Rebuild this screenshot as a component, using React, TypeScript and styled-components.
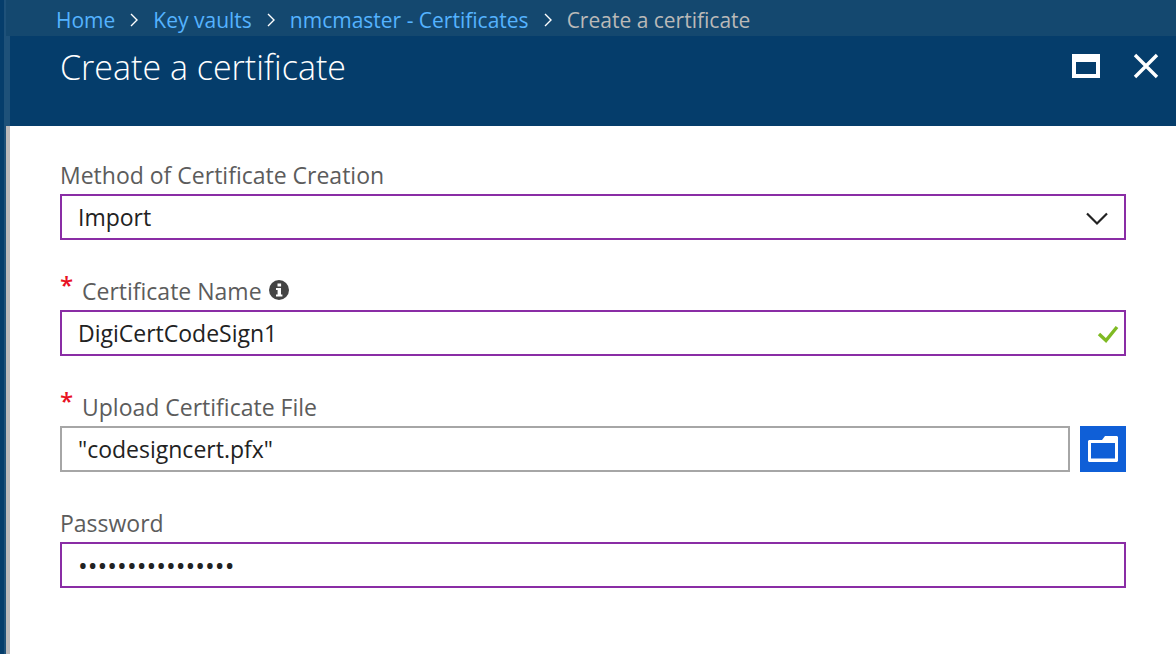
import React from 'react';
import styled, { createGlobalStyle } from 'styled-components';

const GlobalStyle = createGlobalStyle`
  * { box-sizing: border-box; }
  body {
    margin: 0;
    background: #053d6b;
    font-family: "Open Sans", "Noto Sans", sans-serif;
  }
`;

const Shell = styled.div`
  display: flex;
  flex-direction: column;
  min-height: 100vh;
  margin-left: 4px;
  border-left: 2px solid #1e5179;
`;

const Breadcrumbs = styled.nav`
  display: flex;
  align-items: center;
  height: 36px;
  padding: 4px 50px 0 50px;
  background: #14486f;
  font-size: 21px;
  line-height: 32px;
  white-space: nowrap;
`;

const CrumbLink = styled.a`
  color: #55b3ff;
  text-decoration: none;
`;

const CurrentCrumb = styled.span`
  color: #bab9b8;
`;

const Separator = styled.svg`
  flex: none;
  width: 8px;
  height: 14px;
  margin: 0 15px;
`;

const Header = styled.header`
  display: flex;
  justify-content: space-between;
  align-items: flex-start;
  height: 90px;
  padding: 8px 16px 0 50px;
  border-left: 4px solid #1e5179;
  background: #053d6b;
`;

const Title = styled.h1`
  margin: 0;
  color: #fff;
  font-size: 34px;
  font-weight: 300;
  line-height: 46px;
`;

const WindowButtons = styled.div`
  display: flex;
  gap: 30px;
  padding-top: 8px;
`;

const IconButton = styled.button`
  display: flex;
  padding: 0;
  border: 0;
  background: transparent;
  cursor: pointer;
`;

const Form = styled.form`
  display: flex;
  flex: 1;
  flex-direction: column;
  gap: 34px;
  padding: 32px 50px 32px 50px;
  border-left: 4px solid #bdb9b9;
  background: #fff;
`;

const FieldHeading = styled.div`
  display: flex;
  align-items: flex-start;
  height: 36px;
`;

const Required = styled.span`
  width: 22px;
  color: #e81123;
  font-size: 24px;
  font-weight: 600;
  line-height: 22px;
`;

const Label = styled.label`
  color: #5c5c5c;
  font-size: 23px;
  line-height: 34px;
`;

const InfoIcon = styled.svg`
  margin: 6px 0 0 6px;
`;

const Control = styled.div`
  position: relative;
  display: flex;
  gap: 10px;
`;

const controlBase = `
  flex: 1;
  min-width: 0;
  width: 100%;
  height: 46px;
  margin: 0;
  padding: 0 48px 0 16px;
  border-radius: 0;
  outline: none;
  background: #fff;
  color: #222;
  font-family: inherit;
  font-size: 23px;
`;

const TextInput = styled.input<{ $plain?: boolean }>`
  ${controlBase}
  border: 2px solid ${(p) => (p.$plain ? '#a6a6a6' : '#8a2da5')};
`;

const PasswordInput = styled(TextInput)`
  font-size: 26px;
`;

const Select = styled.select`
  ${controlBase}
  appearance: none;
  border: 2px solid #8a2da5;
`;

const ControlIcon = styled.svg<{ $right: number }>`
  position: absolute;
  top: 12px;
  right: ${(p) => p.$right}px;
  pointer-events: none;
`;

const BrowseButton = styled.button`
  display: flex;
  align-items: center;
  justify-content: center;
  width: 46px;
  height: 46px;
  padding: 0;
  border: 0;
  background: #0f5fd7;
  cursor: pointer;
`;

const CrumbSeparator = () => (
  <Separator viewBox="0 0 8 14" aria-hidden="true">
    <path d="M1 1l6 6-6 6" fill="none" stroke="#fff" strokeWidth="1.4" />
  </Separator>
);

interface FieldProps {
  id: string;
  label: string;
  required?: boolean;
  info?: boolean;
  children: React.ReactNode;
}

const Field = ({ id, label, required, info, children }: FieldProps) => (
  <div>
    <FieldHeading>
      {required && <Required aria-hidden="true">*</Required>}
      <Label htmlFor={id}>{label}</Label>
      {info && (
        <InfoIcon width="22" height="22" viewBox="0 0 22 22" aria-hidden="true">
          <circle cx="11" cy="10" r="10" fill="#444" />
          <path d="M9.500 3.400h3.600v3H9.500zM8 8h5v6.400h1.400v2H8v-2h1.600V10H8z" fill="#fff" />
        </InfoIcon>
      )}
    </FieldHeading>
    <Control>{children}</Control>
  </div>
);

export default function App() {
  return (
    <>
      <GlobalStyle />
      <Shell>
        <Breadcrumbs aria-label="Breadcrumb">
          <CrumbLink href="#home">Home</CrumbLink>
          <CrumbSeparator />
          <CrumbLink href="#vaults">Key vaults</CrumbLink>
          <CrumbSeparator />
          <CrumbLink href="#certificates">nmcmaster - Certificates</CrumbLink>
          <CrumbSeparator />
          <CurrentCrumb aria-current="page">Create a certificate</CurrentCrumb>
        </Breadcrumbs>
        <Header>
          <Title>Create a certificate</Title>
          <WindowButtons>
            <IconButton type="button" aria-label="Maximize">
              <svg width="32" height="28" viewBox="0 0 32 28">
                <path d="M2 2h28v24H2zM6 10v12h20V10z" fill="#fff" fillRule="evenodd" />
              </svg>
            </IconButton>
            <IconButton type="button" aria-label="Close">
              <svg width="28" height="28" viewBox="0 0 28 28">
                <path d="M3 3l22 22M25 3L3 25" stroke="#fff" strokeWidth="3.4" />
              </svg>
            </IconButton>
          </WindowButtons>
        </Header>
        <Form>
          <Field id="method" label="Method of Certificate Creation">
            <Select id="method" defaultValue="Import">
              <option>Import</option>
            </Select>
            <ControlIcon $right={16} width="26" height="24" viewBox="0 0 26 24">
              <path d="M3 7.5l10 10 10-10" fill="none" stroke="#222" strokeWidth="2.2" />
            </ControlIcon>
          </Field>
          <Field id="name" label="Certificate Name" required info>
            <TextInput id="name" type="text" defaultValue="DigiCertCodeSign1" />
            <ControlIcon $right={6} width="24" height="24" viewBox="0 0 24 24">
              <path d="M3 12l7 6.500L21 5" fill="none" stroke="#7fba23" strokeWidth="3.4" />
            </ControlIcon>
          </Field>
          <Field id="file" label="Upload Certificate File" required>
            <TextInput id="file" type="text" $plain defaultValue={'"codesigncert.pfx"'} />
            <BrowseButton type="button" aria-label="Browse for a file">
              <svg width="30" height="26" viewBox="0 0 30 26">
                <path
                  d="M1 4h13l3-4h12l1 1v24l-1 1H1l-1-1V5zM3 7v15.500h24V7z"
                  fill="#fff"
                  fillRule="evenodd"
                />
              </svg>
            </BrowseButton>
          </Field>
          <Field id="password" label="Password">
            <PasswordInput id="password" type="password" defaultValue="certificate-pass" />
          </Field>
        </Form>
      </Shell>
    </>
  );
}
